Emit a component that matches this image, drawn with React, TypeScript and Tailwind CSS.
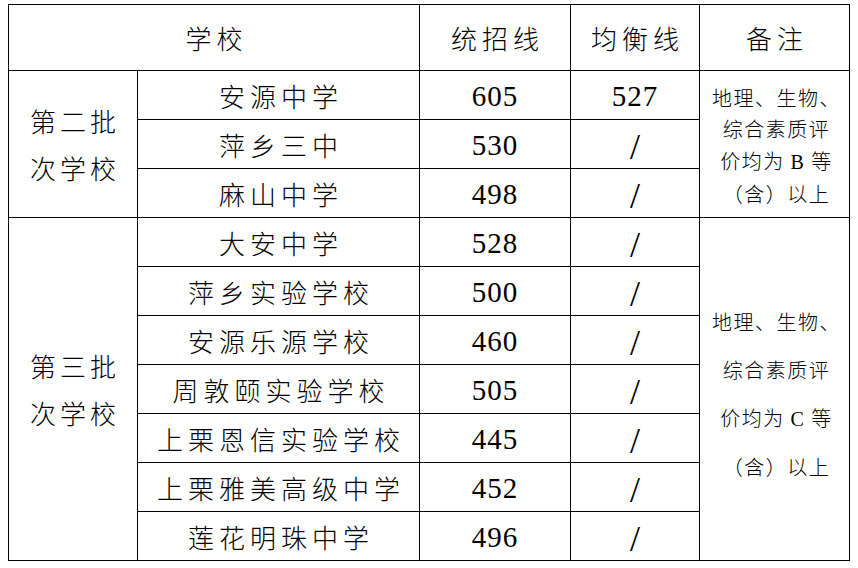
import React from 'react';

const cjk = "font-['Noto_Sans_CJK_SC',sans-serif] font-light";
const num = "font-['Liberation_Serif','Times_New_Roman',serif]";

type Row = { school: string; score: string; balance: string };

const batch2: Row[] = [
  { school: '安源中学', score: '605', balance: '527' },
  { school: '萍乡三中', score: '530', balance: '/' },
  { school: '麻山中学', score: '498', balance: '/' },
];

const batch3: Row[] = [
  { school: '大安中学', score: '528', balance: '/' },
  { school: '萍乡实验学校', score: '500', balance: '/' },
  { school: '安源乐源学校', score: '460', balance: '/' },
  { school: '周敦颐实验学校', score: '505', balance: '/' },
  { school: '上栗恩信实验学校', score: '445', balance: '/' },
  { school: '上栗雅美高级中学', score: '452', balance: '/' },
  { school: '莲花明珠中学', score: '496', balance: '/' },
];

const cell = 'border border-black p-0 text-center align-middle';

const Balance = ({ v }: { v: string }) =>
  v === '/' ? (
    <span className={`${num} text-[36px] leading-none relative top-[3px]`}>/</span>
  ) : (
    <span className={`${num} text-[29px] tracking-[1px] relative top-[2px]`}>{v}</span>
  );

const Note = ({ grade, lh }: { grade: string; lh: string }) => (
  <div className={`${cjk} text-[20px] tracking-[1.5px] pl-[4px] ${lh}`}>
    <div>地理、生物、</div>
    <div>综合素质评</div>
    <div>
      价均为 <span className={num}>{grade}</span> 等
    </div>
    <div>（含）以上</div>
  </div>
);

function Group({ label, rows, grade, lh }: { label: [string, string]; rows: Row[]; grade: string; lh: string }) {
  return (
    <>
      {rows.map((r, i) => (
        <tr key={r.school} className="h-[49px]">
          {i === 0 && (
            <td rowSpan={rows.length} className={cell}>
              <div className={`${cjk} text-[26px] tracking-[4px] leading-[47px] pl-[4px]`}>
                <div>{label[0]}</div>
                <div>{label[1]}</div>
              </div>
            </td>
          )}
          <td className={cell}>
            <span className={`${cjk} text-[26px] tracking-[5px] pl-[5px]`}>{r.school}</span>
          </td>
          <td className={cell}>
            <span className={`${num} text-[29px] tracking-[1px] relative top-[2px]`}>{r.score}</span>
          </td>
          <td className={cell}>
            <Balance v={r.balance} />
          </td>
          {i === 0 && (
            <td rowSpan={rows.length} className={cell}>
              <Note grade={grade} lh={lh} />
            </td>
          )}
        </tr>
      ))}
    </>
  );
}

export default function App() {
  return (
    <div className="w-[858px] h-[568px] bg-white text-black pt-[4px] pl-[8px]">
      <table className="table-fixed border-collapse border border-black w-[841px]">
        <colgroup>
          <col className="w-[129px]" />
          <col className="w-[282px]" />
          <col className="w-[151px]" />
          <col className="w-[129px]" />
          <col className="w-[150px]" />
        </colgroup>
        <tbody>
          <tr className="h-[66px]">
            <td colSpan={2} className={cell}>
              <span className={`${cjk} text-[26px] tracking-[5px] pl-[5px]`}>学校</span>
            </td>
            <td className={cell}>
              <span className={`${cjk} text-[26px] tracking-[5px] pl-[5px]`}>统招线</span>
            </td>
            <td className={cell}>
              <span className={`${cjk} text-[26px] tracking-[5px] pl-[5px]`}>均衡线</span>
            </td>
            <td className={cell}>
              <span className={`${cjk} text-[26px] tracking-[5px] pl-[5px]`}>备注</span>
            </td>
          </tr>
          <Group label={['第二批', '次学校']} rows={batch2} grade="B" lh="leading-[31.5px] pt-[3px]" />
          <Group label={['第三批', '次学校']} rows={batch3} grade="C" lh="leading-[48px] pt-[11px]" />
        </tbody>
      </table>
    </div>
  );
}
